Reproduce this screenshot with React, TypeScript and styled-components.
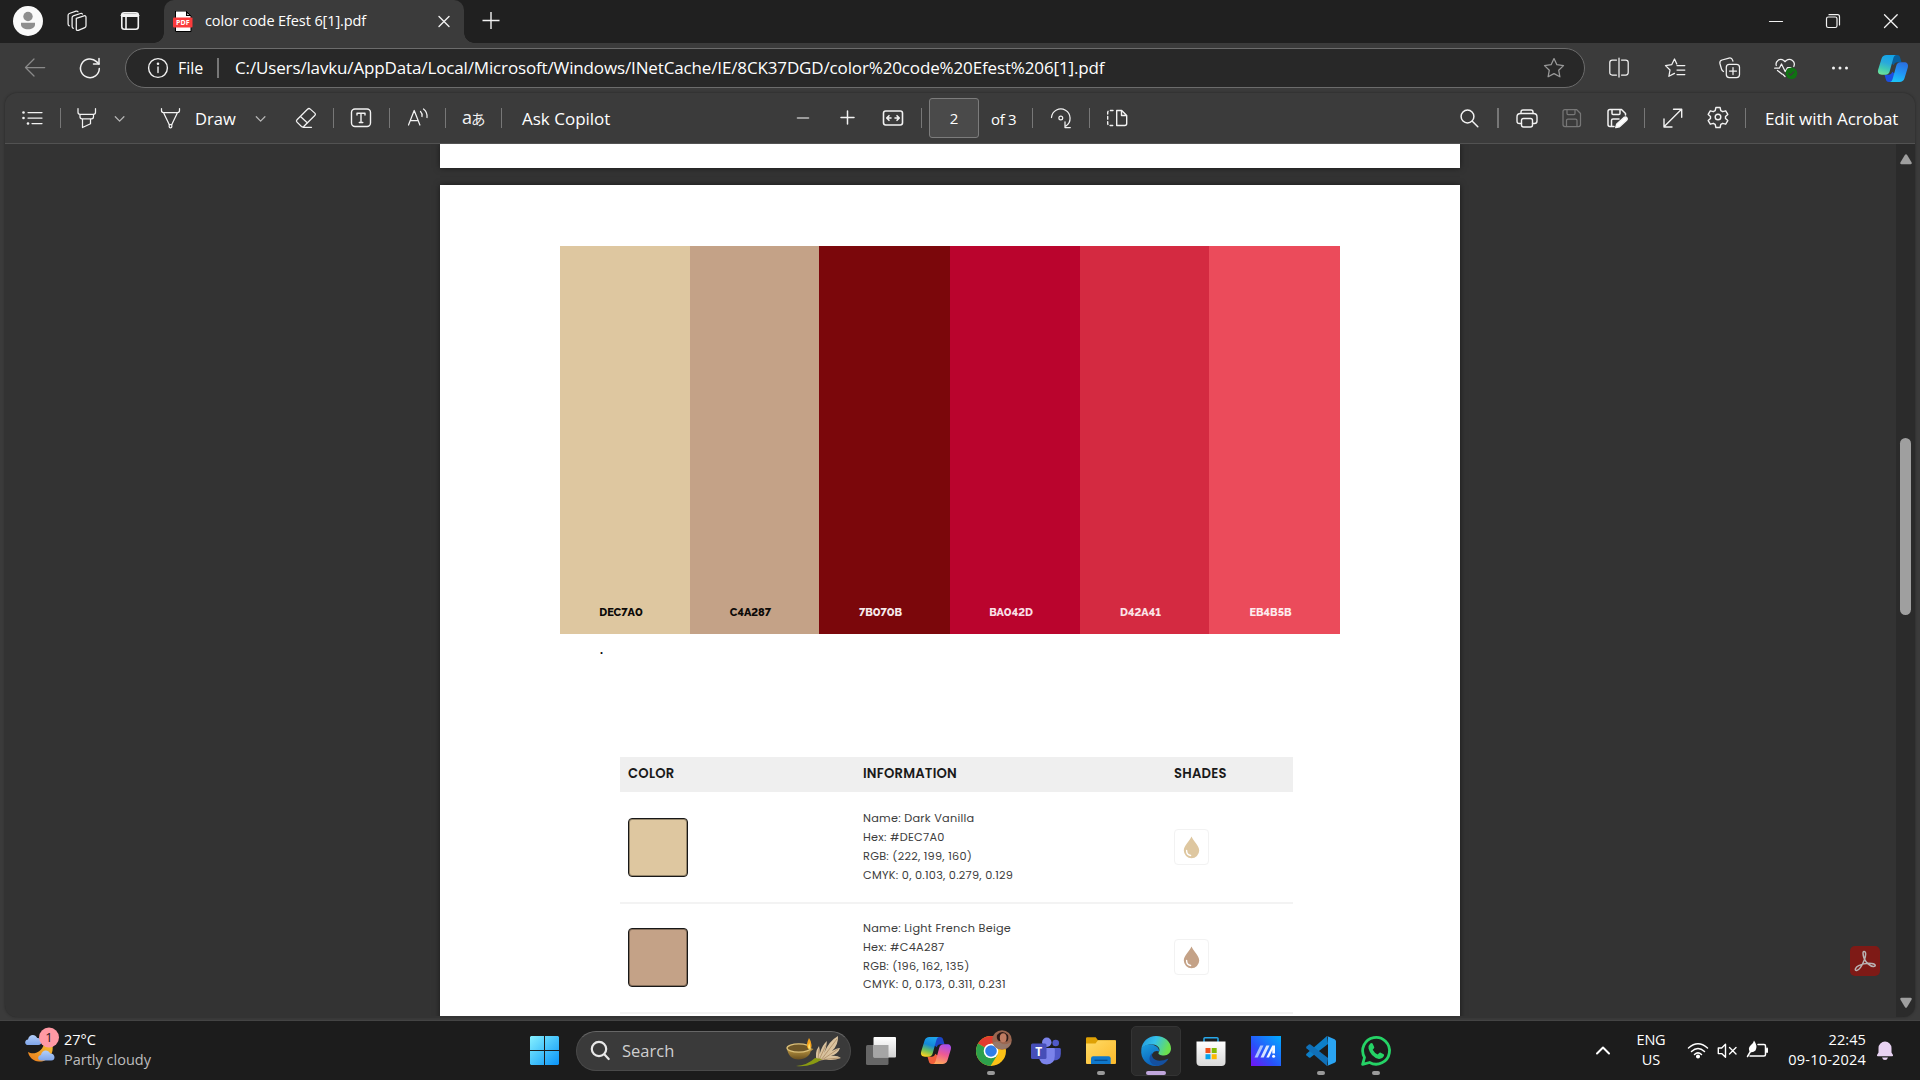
import React from "react";
import styled, { createGlobalStyle } from "styled-components";

const GlobalStyle = createGlobalStyle`
  html, body { margin: 0; background: #3b3b3b; }
  body { width: 1920px; height: 1080px; overflow: hidden; }
  * { box-sizing: border-box; }
`;

const UI = `"Segoe UI", "Open Sans", "Noto Sans", sans-serif`;

const Desktop = styled.div`
  display: flex;
  flex-direction: column;
  width: 1920px;
  height: 1080px;
  background: #3b3b3b;
  color: #fff;
  font-family: ${UI};
  overflow: hidden;
`;

/* ---------- shared pieces ---------- */
const Cell = styled.div<{ $w?: number; $ml?: number }>`
  flex: none;
  display: flex;
  align-items: center;
  justify-content: center;
  width: ${(p) => p.$w ?? 24}px;
  height: 24px;
  margin-left: ${(p) => p.$ml ?? 0}px;
  svg { display: block; flex: none; overflow: visible; }
`;

const Label = styled.span<{ $w?: number; $ml?: number; $size?: number; $track?: number; $color?: string }>`
  flex: none;
  display: block;
  width: ${(p) => (p.$w ? `${p.$w}px` : "auto")};
  margin-left: ${(p) => p.$ml ?? 0}px;
  font-size: ${(p) => p.$size ?? 17}px;
  letter-spacing: ${(p) => p.$track ?? 0}px;
  color: ${(p) => p.$color ?? "#fff"};
  line-height: 24px;
  white-space: nowrap;
`;

const Divider = styled.i<{ $ml: number; $w?: number }>`
  flex: none;
  width: ${(p) => p.$w ?? 1}px;
  height: 20px;
  margin-left: ${(p) => p.$ml}px;
  background: #777;
`;

type IconProps = { children: React.ReactNode; color?: string; sw?: number; size?: number };
const Icon = ({ children, color = "#f2f2f2", sw = 1.25, size = 24 }: IconProps) => (
  <svg width={size} height={size} viewBox="0 0 24 24" fill="none" stroke={color} strokeWidth={sw} strokeLinecap="round" strokeLinejoin="round">
    {children}
  </svg>
);

/* ---------- title bar ---------- */
const TitleBar = styled.header`
  flex: none;
  display: flex;
  height: 43px;
  background: #202020;
`;
const Leading = styled.div`
  display: flex;
  align-items: center;
  width: 164px;
  height: 42px;
`;
const Avatar = styled.div`
  width: 30px;
  height: 30px;
  margin-left: 13px;
  border-radius: 50%;
  background: #fafafa;
  svg { display: block; }
`;
const Tab = styled.div`
  position: relative;
  display: flex;
  align-items: center;
  width: 300px;
  height: 43px;
  padding-bottom: 1px;
  border-radius: 10px 10px 0 0;
  background: #3b3b3b;
  &::before, &::after {
    content: "";
    position: absolute;
    bottom: 0;
    width: 10px;
    height: 10px;
  }
  &::before { left: -10px; background: radial-gradient(circle at 0 0, #202020 9.5px, #3b3b3b 10px); }
  &::after { right: -10px; background: radial-gradient(circle at 100% 0, #202020 9.5px, #3b3b3b 10px); }
`;
const Favicon = styled.div`
  margin-left: 9px;
  width: 20px;
  height: 21px;
  svg { display: block; }
`;
const WindowControls = styled.div`
  display: flex;
  align-items: center;
  height: 42px;
  margin-left: auto;
  margin-right: 17px;
`;

/* ---------- navigation ---------- */
const NavBar = styled.nav`
  flex: none;
  display: flex;
  align-items: center;
  height: 50px;
`;
const AddressBar = styled.div`
  display: flex;
  align-items: center;
  width: 1460px;
  height: 40px;
  margin: 0 0 0 23px;
  padding: 0 18px 0 20px;
  border: 1px solid #6c6c6c;
  border-radius: 20px;
  background: #282828;
  & > :last-child { margin-left: auto; }
`;

/* ---------- pdf viewer ---------- */
const Viewer = styled.main`
  flex: none;
  display: flex;
  flex-direction: column;
  width: 1910px;
  height: 924px;
  margin: 0 5px;
  border-radius: 12px;
  background: #333;
  box-shadow: 0 0 3px rgba(0, 0, 0, 0.35);
  overflow: hidden;
`;
const PdfToolbar = styled.div`
  flex: none;
  display: flex;
  align-items: center;
  height: 51px;
  border-bottom: 1px solid #525252;
  background: #3b3b3b;
  & > span { padding-top: 1px; }
`;
const PageInput = styled.div`
  flex: none;
  display: flex;
  align-items: center;
  justify-content: center;
  width: 50px;
  height: 40px;
  margin-left: 7px;
  border: 1px solid #7c7c7c;
  border-radius: 3px;
  background: #4a4a4a;
  font-size: 15px;
`;
const Body = styled.div`
  display: flex;
  height: 873px;
`;
const Canvas = styled.div`
  position: relative;
  flex: none;
  display: flex;
  flex-direction: column;
  align-items: flex-start;
  width: 1891px;
  height: 872px;
  padding-left: 435px;
  overflow: hidden;
`;
const PreviousPage = styled.div`
  flex: none;
  width: 1020px;
  height: 24px;
  background: #fff;
  box-shadow: 0 0 6px rgba(0, 0, 0, 0.5);
`;
const Page = styled.article`
  flex: none;
  width: 1020px;
  height: 1320px;
  margin-top: 17px;
  padding: 61px 0 0 120px;
  background: #fff;
  box-shadow: 0 0 6px rgba(0, 0, 0, 0.5);
`;
const ScrollTrack = styled.div`
  display: flex;
  flex-direction: column;
  align-items: center;
  width: 19px;
  height: 873px;
  padding: 10px 0 9px;
  background: #2b2b2b;
  svg { display: block; flex: none; }
`;
const Thumb = styled.div`
  width: 11px;
  height: 177px;
  margin: 273px 0 auto;
  border-radius: 6px;
  background: #9f9f9f;
`;
const AcrobatBadge = styled.div`
  position: absolute;
  right: 16px;
  bottom: 40px;
  width: 30px;
  height: 30px;
  border-radius: 5px;
  background: #7e1a16;
  svg { display: block; }
`;

const Palette = styled.div`
  display: grid;
  grid-template-columns: 130px 129px 131px 130px 129px 131px;
  width: 780px;
  height: 388px;
`;
const Band = styled.div<{ $bg: string; $fg: string }>`
  display: flex;
  align-items: flex-end;
  justify-content: center;
  padding: 0 8px 14px 0;
  background: ${(p) => p.$bg};
  color: ${(p) => p.$fg};
  font: 800 11px/15px Raleway, Poppins, Lato, sans-serif;
  font-variant-numeric: lining-nums;
`;
const Mark = styled.p`
  margin: 9px 0 0 40px;
  height: 14px;
  color: #000;
  font: bold 12px/15px "Liberation Serif", serif;
`;
const Table = styled.section`
  width: 673px;
  margin: 100px 0 0 60px;
  font-family: Poppins, Inter, sans-serif;
`;
const HeadRow = styled.div`
  display: grid;
  grid-template-columns: 235px 311px 1fr;
  height: 35px;
  padding-left: 8px;
  background: #efefef;
  color: #1a1a1a;
  font-weight: 600;
  font-size: 13.2px;
  letter-spacing: 0.2px;
  line-height: 33px;
`;
const ColorRow = styled.div<{ $h: number; $top: number }>`
  display: grid;
  grid-template-columns: 235px 311px 1fr;
  align-items: start;
  height: ${(p) => p.$h}px;
  padding: ${(p) => p.$top}px 0 0 8px;
  border-bottom: 2px solid #f3f3f3;
`;
const Swatch = styled.div<{ $bg: string }>`
  width: 60px;
  height: 59px;
  margin-top: 10px;
  border: 1px solid #181818;
  border-radius: 4px;
  background: ${(p) => p.$bg};
  box-shadow: inset 0 0 0 1px rgba(20, 16, 10, 0.35);
`;
const Info = styled.div<{ $lh: number }>`
  margin-top: 1px;
  color: #3c3c3c;
  font-size: 11.3px;
  letter-spacing: 0.26px;
  line-height: ${(p) => p.$lh}px;
  white-space: nowrap;
  div { height: ${(p) => p.$lh}px; }
`;
const ShadeButton = styled.div`
  display: flex;
  align-items: center;
  justify-content: center;
  width: 35px;
  height: 36px;
  margin-top: 21px;
  border: 1px solid #f2f2f2;
  border-radius: 4px;
`;

/* ---------- taskbar ---------- */
const Taskbar = styled.footer`
  flex: none;
  display: flex;
  align-items: center;
  height: 60px;
  margin-top: 3px;
  border-top: 1px solid #444;
  background: #1c1c1c;
`;
const WeatherIcon = styled.div`
  width: 35px;
  height: 36px;
  margin: -12px 0 0 25px;
  svg { display: block; }
`;
const Stack = styled.div<{ $w: number; $ml: number; $align?: string }>`
  display: flex;
  flex-direction: column;
  width: ${(p) => p.$w}px;
  margin-left: ${(p) => p.$ml}px;
  padding-bottom: 2px;
  color: #fff;
  font-size: 14.5px;
  line-height: 20px;
  text-align: ${(p) => p.$align ?? "left"};
  white-space: nowrap;
`;
const Line = styled.span<{ $track?: number; $muted?: boolean }>`
  display: block;
  letter-spacing: ${(p) => p.$track ?? 0}px;
  color: ${(p) => (p.$muted ? "#bdbdbd" : "inherit")};
`;
const SearchBox = styled.div`
  display: flex;
  align-items: center;
  width: 275px;
  height: 40px;
  margin-left: 17px;
  padding: 0 7px 0 10px;
  border: 1px solid #4a4a4a;
  border-top-color: #666;
  border-radius: 20px;
  background: #3a3a3a;
  & > :last-child { margin-left: auto; }
`;
const Apps = styled.div`
  display: flex;
  gap: 5px;
  margin-left: 5px;
`;
const Tile = styled.div<{ $state?: "open" | "active" }>`
  position: relative;
  display: flex;
  align-items: center;
  justify-content: center;
  width: 50px;
  height: 50px;
  border: 1px solid ${(p) => (p.$state === "active" ? "#343434" : "transparent")};
  border-radius: 5px;
  background: ${(p) => (p.$state === "active" ? "#2a2a2a" : "transparent")};
  svg { display: block; overflow: visible; }
  &::after {
    content: "";
    display: ${(p) => (p.$state ? "block" : "none")};
    position: absolute;
    bottom: 0;
    width: ${(p) => (p.$state === "active" ? 20 : 8)}px;
    height: 4px;
    border-radius: 2px;
    background: ${(p) => (p.$state === "active" ? "#c0a6dc" : "#9a9a9a")};
  }
`;

/* ---------- drawings ---------- */
const Ribbon = ({ id, warm }: { id: string; warm?: boolean }) => (
  <svg width="30" height="27" viewBox="0 0 30 27">
    <defs>
      <linearGradient id={`${id}a`} x1="0.6" y1="0" x2="0.3" y2="1">
        <stop offset="0" stopColor={warm ? "#1ea4ea" : "#12a4e8"} />
        <stop offset="0.4" stopColor={warm ? "#1488d8" : "#2aa9dc"} />
        <stop offset="0.7" stopColor={warm ? "#6bbf5c" : "#3fc9b5"} />
        <stop offset="1" stopColor={warm ? "#ffd21f" : "#6ee29a"} />
      </linearGradient>
      <linearGradient id={`${id}b`} x1="0.7" y1="0" x2="0.4" y2="1">
        <stop offset="0" stopColor={warm ? "#a64df0" : "#2a6fe0"} />
        <stop offset="0.5" stopColor={warm ? "#ee5a93" : "#2292f5"} />
        <stop offset="1" stopColor={warm ? "#ffa65c" : "#1cc4f6"} />
      </linearGradient>
    </defs>
    <path d="M14 0h5c2 0 2.700 1 3.200 2.700l1.300 4.500h-4c-2 0-3.200 1-3.800 3L13 8z" fill={warm ? "#1b46c8" : "#075f9e"} />
    <path d="M16 27h-5c-2 0-2.700-1-3.200-2.700l-1.300-4.500h4c2 0 3.200-1 3.800-3L17 19z" fill={warm ? "#f2603c" : "#1b4fe0"} />
    <path d="M8.500 0H18c-1.600.5-2.300 1.800-2.900 4l-3.300 12c-.7 2.600-1.900 3.800-4.300 3.800H4C.8 19.800-.7 17.800.2 14.600L3.500 3.700C4.300 1.200 6 0 8.500 0z" fill={`url(#${id}a)`} />
    <path d="M21.500 27H12c1.600-.5 2.300-1.800 2.900-4l3.300-12c.7-2.600 1.900-3.800 4.300-3.800H26c3.200 0 4.700 2 3.800 5.200l-3.300 10.900c-.8 2.500-2.500 3.700-5 3.700z" fill={`url(#${id}b)`} />
  </svg>
);

const Drop = ({ color }: { color: string }) => (
  <svg width="17" height="23" viewBox="0 0 17 23">
    <path d="M8.500.5C6.500 5 .8 9.800.8 14.600a7.700 7.700 0 0 0 15.400 0C16.200 9.800 10.500 5 8.500.5z" fill={color} />
    <path d="M3.600 14.500c0 2.800 1.600 4.600 4 5" fill="none" stroke="#fff" strokeWidth="1.400" strokeLinecap="round" />
  </svg>
);

const bands = [
  ["DEC7A0", "#0c0a08"],
  ["C4A287", "#0c0a08"],
  ["7B070B", "#f5e9ea"],
  ["BA042D", "#f9dfe5"],
  ["D42A41", "#fbe4e7"],
  ["EB4B5B", "#fdebed"],
];

const colors = [
  { hex: "#DEC7A0", h: 112, top: 16, lh: 19, lines: ["Name: Dark Vanilla", "Hex: #DEC7A0", "RGB: (222, 199, 160)", "CMYK: 0, 0.103, 0.279, 0.129"] },
  { hex: "#C4A287", h: 110, top: 14, lh: 18.8, lines: ["Name: Light French Beige", "Hex: #C4A287", "RGB: (196, 162, 135)", "CMYK: 0, 0.173, 0.311, 0.231"] },
];

const Chevron = () => (
  <svg width="12" height="8" viewBox="0 0 12 8" fill="none" stroke="#b5b5b5" strokeWidth="1.300" strokeLinecap="round" strokeLinejoin="round">
    <path d="M1.300 2.800 5.600 7.100 9.900 2.800" />
  </svg>
);

const TitleRow = () => (
  <TitleBar>
    <Leading>
      <Avatar>
        <svg width="30" height="30" viewBox="0 0 30 30" fill="#8e8e8e">
          <circle cx="15" cy="10.500" r="4.700" />
          <path d="M8 16.800h14v1.400c0 3.400-3 5-7 5s-7-1.600-7-5z" />
        </svg>
      </Avatar>
      <Cell $ml={21}>
        <Icon>
          <path d="M12.300 9.300 20 6.800q2-.5 2 1.400v8.600q0 1.300-1.200 1.800l-6.500 2.700q-2 .7-2-1.300z" />
          <path d="M9.300 19.300q-1.200-.5-1.200-1.800V8.700q0-1.300 1.200-1.800L16.500 4.500q1.300-.4 1.900.5" />
          <path d="M5.300 16.800q-1.200-.5-1.200-1.800V6.300q0-1.300 1.200-1.800l6.700-2.300q1.400-.4 2 .6" />
        </Icon>
      </Cell>
      <Cell $ml={30}>
        <Icon sw={1.6}>
          <rect x="3.800" y="3.800" width="16.500" height="16.500" rx="2.500" />
          <path d="M4.500 6.200h15" strokeWidth="3.600" />
          <path d="M8 8v12" />
        </Icon>
      </Cell>
    </Leading>
    <Tab>
      <Favicon>
        <svg width="20" height="21" viewBox="0 0 20 21">
          <path d="M2.500 0h10.500l5 5v15.500h-15.500z" fill="#fff" stroke="#000" strokeWidth="1" />
          <path d="M13 0v5h5z" fill="#000" />
          <path d="m14.300 2.300 1.800 1.800h-1.800z" fill="#fff" />
          <rect x="0" y="6.500" width="19.500" height="10" rx="1" fill="#fb3b3b" />
          <text x="9.800" y="14" fontSize="7" fontWeight="700" fontFamily="Open Sans, sans-serif" fill="#fff" textAnchor="middle">PDF</text>
        </svg>
      </Favicon>
      <Label $ml={12} $w={220} $size={14.5} $track={-0.1}>color code Efest 6[1].pdf</Label>
      <Cell $ml={7} $w={24}>
        <Icon sw={1.4}><path d="m7 7.500 10 10m0-10-10 10" /></Icon>
      </Cell>
    </Tab>
    <Cell $ml={15}>
      <svg width="18" height="42" viewBox="0 0 18 42" stroke="#f2f2f2" strokeWidth="1.400"><path d="M9 21v17M.5 29.500h17" /></svg>
    </Cell>
    <WindowControls>
      <Cell><Icon sw={1.2}><path d="M5.500 12.500h13" /></Icon></Cell>
      <Cell $ml={33}>
        <Icon sw={1.2}>
          <rect x="5.500" y="8" width="10.500" height="10.500" rx="1.800" />
          <path d="M8 5.700h8.500q2 0 2 2V16" />
        </Icon>
      </Cell>
      <Cell $ml={34}><Icon sw={1.3}><path d="m5.500 5.800 12.700 12.700m0-12.700L5.500 18.500" /></Icon></Cell>
    </WindowControls>
  </TitleBar>
);

const Nav = () => (
  <NavBar>
    <Cell $ml={23}><Icon color="#8a8a8a"><path d="M21.700 11.500H2.500M11 3 2.500 11.500 11 20" /></Icon></Cell>
    <Cell $ml={31}>
      <Icon sw={1.5}>
        <path d="M21.300 12.500A9.400 9.400 0 1 1 18.500 5.600L21 8" />
        <path d="M21 2.500V8h-5.500" />
      </Icon>
    </Cell>
    <AddressBar>
      <Cell>
        <Icon sw={1.4}><circle cx="12" cy="12" r="9.400" /><path d="M12 11v5.500" /><circle cx="12" cy="7.800" r=".6" fill="#fff" /></Icon>
      </Cell>
      <Label $ml={8} $w={34} $size={16}>File</Label>
      <Divider $ml={5} $w={2} />
      <Label $ml={16} $size={17} $track={-0.14}>
        C:/Users/lavku/AppData/Local/Microsoft/Windows/INetCache/IE/8CK37DGD/color%20code%20Efest%206[1].pdf
      </Label>
      <Cell>
        <Icon color="#9a9a9a"><path d="m12 2.600 2.900 6.100 6.600.9-4.800 4.600 1.200 6.600-5.900-3.200-5.900 3.200 1.200-6.600-4.800-4.600 6.600-.9z" /></Icon>
      </Cell>
    </AddressBar>
    <Cell $ml={22}>
      <Icon>
        <path d="M9.500 4H5.300q-2.500 0-2.500 2.500v10Q2.800 19 5.300 19H9.500M14.500 4h4.200q2.500 0 2.500 2.500v10q0 2.500-2.500 2.500h-4.200M12 2v19" />
      </Icon>
    </Cell>
    <Cell $ml={32}>
      <Icon>
        <path d="M13.800 8 11.500 3 8.700 8.700l-6.200.9 4.500 4.400-1.100 6.300 5.600-2.900" />
        <path d="M14 9.500h7.800M14 14h7.800M14 18.500h7.800" />
      </Icon>
    </Cell>
    <Cell $ml={31}>
      <Icon>
        <rect x="8.300" y="8.300" width="13.200" height="13.200" rx="3" />
        <path d="M15 11.500v7M11.500 15h7" />
        <path d="M5.500 15.500Q4 14.800 3.500 13L1.900 7.500Q1.400 4.700 4 4l7-1.900q2.800-.6 3.600 2l.3 1" />
      </Icon>
    </Cell>
    <Cell $ml={31}>
      <Icon>
        <path d="M12 20.500 9.800 18.300M3.300 9.500C2 5.500 6.500 1.500 10.800 4.500L12 5.700l1.200-1.200C17.500 1.500 23 5.500 20.800 10.500" />
        <path d="M1.700 12.200h4.600l2.200-4.200 3.700 7.500 2.300-4h3.500M4.500 14.500 9 18" />
        <circle cx="18.500" cy="17.300" r="5.800" fill="#0f7312" stroke="none" />
        <path d="m16 17.500 1.700 1.700 3.200-3.400" stroke="#3b3b3b" />
      </Icon>
    </Cell>
    <Cell $ml={31}>
      <Icon><g fill="#f2f2f2" stroke="none"><circle cx="5.500" cy="12" r="1.500" /><circle cx="12" cy="12" r="1.500" /><circle cx="18.500" cy="12" r="1.500" /></g></Icon>
    </Cell>
    <Cell $ml={26} $w={30}><Ribbon id="nav" /></Cell>
  </NavBar>
);

const Tools = () => (
  <PdfToolbar>
    <Cell $ml={15}>
      <Icon>
        <path d="M8 6.500h14M8 12h14M12 17.500h10" />
        <g fill="#f2f2f2" stroke="none"><circle cx="3.500" cy="6.500" r="1.300" /><circle cx="3.500" cy="12" r="1.300" /><circle cx="8" cy="17.500" r="1.300" /></g>
      </Icon>
    </Cell>
    <Divider $ml={16} />
    <Cell $ml={14}>
      <Icon>
        <path d="M3 2.500v3.800q0 2 2 2h13.500q2 0 2-2V2.500M5 8.500v2.300q0 2 2 2h9.500q2 0 2-2V8.500M7.500 13v8.500l8-3.800V13" />
      </Icon>
    </Cell>
    <Cell $ml={15} $w={12}><Chevron /></Cell>
    <Cell $ml={33}>
      <Icon>
        <path d="M2.500 2.500v2q0 2 2 2h14q2 0 2-2v-2M4.700 7l5.500 11.500v2.300q0 1 1.300 1t1.300-1v-2.300L18.300 7M10 18.500h3" />
      </Icon>
    </Cell>
    <Label $ml={12} $w={45} $size={16.5}>Draw</Label>
    <Cell $ml={15} $w={12}><Chevron /></Cell>
    <Cell $ml={27}>
      <Icon>
        <path d="M13.500 3.200 3 13.700q-1.200 1.200 0 2.400l4.500 4.400q1 .8 2.200 0L20.800 9.500q1.200-1.200 0-2.400l-4.500-4q-1.400-1.200-2.800.1zM6.500 10.500l7 6.500M9 21.300h8.500" />
      </Icon>
    </Cell>
    <Divider $ml={15} />
    <Cell $ml={15}>
      <Icon sw={1.4}>
        <rect x="2.500" y="3" width="19" height="17.500" rx="3.500" />
        <path d="M8 9V7.300h8V9M12 7.500v9M10.300 16.500h3.500" />
      </Icon>
    </Cell>
    <Divider $ml={16} />
    <Cell $ml={16}>
      <Icon>
        <path d="m2.500 19 5.700-14.500L13.900 19M4.500 14.500h7.500M14.500 5.500q2 2 1.500 5M17.500 3q4 3 3.500 8.500" />
      </Icon>
    </Cell>
    <Divider $ml={15} />
    <Cell $ml={15} $w={26}>
      <svg width="26" height="24" viewBox="0 0 26 24" fill="#f2f2f2">
        <text x="1" y="18" fontSize="18" fontFamily="Open Sans, sans-serif">a</text>
        <text x="10" y="18.500" fontSize="14.500" fontFamily="Noto Sans CJK JP, sans-serif">あ</text>
      </svg>
    </Cell>
    <Divider $ml={14} />
    <Label $ml={20} $w={100} $size={17}>Ask Copilot</Label>
    <Cell $ml={169}><Icon color="#bdbdbd" sw={1.6}><path d="M6.500 12h11" /></Icon></Cell>
    <Cell $ml={21}><Icon sw={1.5}><path d="M5 11.500h13M11.500 5v13" /></Icon></Cell>
    <Cell $ml={21}>
      <Icon sw={1.6}>
        <rect x="2.500" y="5" width="19" height="14" rx="2.200" />
        <path d="M10 12H5.800m2.200-2.300L5.700 12 8 14.300M14 12h4.200M16 9.700l2.300 2.300-2.300 2.300" />
      </Icon>
    </Cell>
    <Divider $ml={16} />
    <PageInput>2</PageInput>
    <Label $ml={12} $w={31} $size={15} $track={-0.3}>of 3</Label>
    <Divider $ml={10} />
    <Cell $ml={16}>
      <Icon>
        <path d="M2.500 11.500a9.300 9.300 0 1 1 14.500 8.500M16 15.800v5.700h5.300" />
        <circle cx="11.800" cy="12" r="1.900" />
      </Icon>
    </Cell>
    <Divider $ml={16} />
    <Cell $ml={15}>
      <Icon sw={1.4}>
        <path d="M11.700 4.500h5l5 5v8q0 2-2 2h-8zM16.500 4.500v5h5" />
        <path d="M8 4.500H5q-2.300 0-2.300 2.300v10.500q0 2.200 2.300 2.200h3" strokeDasharray="2.600 2.600" />
      </Icon>
    </Cell>
    <Cell $ml={328}><Icon sw={1.5}><circle cx="10.500" cy="10.500" r="6.400" /><path d="m15.300 15.200 5.500 5.500" /></Icon></Cell>
    <Divider $ml={16} $w={2} />
    <Cell $ml={16}>
      <Icon sw={1.4}>
        <path d="M6.500 17.500h-2q-2.500 0-2.500-2.500v-4q0-3.500 3.500-3.500h13q3.500 0 3.500 3.500v4q0 2.500-2.500 2.500h-2" />
        <path d="M6 7.500V6q0-2 2-2h8q2 0 2 2v1.500" />
        <rect x="6.500" y="12.500" width="11" height="8.500" rx="2" />
      </Icon>
    </Cell>
    <Cell $ml={21}>
      <Icon color="#777">
        <path d="M5 3.500h11.500L20.500 7.500v11q0 2-2 2H5q-2 0-2-2v-13q0-2 2-2zM7 3.500v4q0 1 1 1h6q1 0 1-1v-4M6.500 20.500v-6q0-1.500 1.500-1.500h7.500q1.500 0 1.500 1.500v6" />
      </Icon>
    </Cell>
    <Cell $ml={21}>
      <Icon sw={1.5}>
        <path d="M9 20.500H5q-2 0-2-2v-13q0-2 2-2h11.500L20.500 7.500V9M7 3.500v4q0 1 1 1h6q1 0 1-1v-4M6.500 20.500v-6q0-1.500 1.500-1.500h6" />
        <path d="m10.800 21.500 1-3.500 7.200-6.500q1.700-1 2.800.2t-.2 2.600L14.500 20.700z" fill="#fff" />
      </Icon>
    </Cell>
    <Divider $ml={15} />
    <Cell $ml={16}><Icon sw={1.4}><path d="M3 20.800 20.500 3.300M3 13v8h8M12.500 3.200h8.200v8" /></Icon></Cell>
    <Cell $ml={21}>
      <Icon sw={1.4}>
        <circle cx="12" cy="11" r="2.800" />
        <path d="M9.900 1.500h4.200l.7 3.100 1.900 1.100 3-.9 2.100 3.600-2.300 2.200v1.800l2.300 2.200-2.100 3.600-3-.9-1.900 1.100-.7 3.100H9.900l-.7-3.100-1.900-1.100-3 .9-2.100-3.600 2.300-2.200v-1.800L2.200 8.400l2.100-3.600 3 .9 1.900-1.100z" />
      </Icon>
    </Cell>
    <Divider $ml={15} />
    <Label $ml={19} $size={17} $track={-0.1}>Edit with Acrobat</Label>
  </PdfToolbar>
);

const Document = () => (
  <Body>
    <Canvas>
      <PreviousPage />
      <Page>
        <Palette>
          {bands.map(([hex, fg]) => (
            <Band key={hex} $bg={`#${hex}`} $fg={fg}>{hex}</Band>
          ))}
        </Palette>
        <Mark>.</Mark>
        <Table>
          <HeadRow><span>COLOR</span><span>INFORMATION</span><span>SHADES</span></HeadRow>
          {colors.map((c) => (
            <ColorRow key={c.hex} $h={c.h} $top={c.top}>
              <Swatch $bg={c.hex} />
              <Info $lh={c.lh}>{c.lines.map((l) => <div key={l}>{l}</div>)}</Info>
              <ShadeButton><Drop color={c.hex} /></ShadeButton>
            </ColorRow>
          ))}
        </Table>
      </Page>
      <AcrobatBadge>
        <svg width="30" height="30" viewBox="0 0 30 30" fill="none" stroke="#b9b3b3" strokeWidth="1.500" strokeLinejoin="round">
          <path d="M14 5.500c2.500 0 1.800 4.500.3 8.500C12.500 18.500 9.500 24 6.700 24.500c-2.500.2-1.500-3 2-4.800 4-2 9.500-2.700 13-2.200 4.500.6 4.300 3.200 1.700 3-3.400-.3-7.700-4-9.400-8.500-1-3-1.500-6.500 0-6.500z" />
        </svg>
      </AcrobatBadge>
    </Canvas>
    <ScrollTrack>
      <svg width="12" height="11" viewBox="0 0 12 11" fill="#9f9f9f"><path d="M5 .8q1-1.200 2 0l4.500 7.500q.8 2-1 2H1.500q-1.800 0-1-2z" /></svg>
      <Thumb />
      <svg width="12" height="11" viewBox="0 0 12 11" fill="#9f9f9f"><path d="M5 10.200q1 1.200 2 0l4.500-7.500q.8-2-1-2H1.500q-1.800 0-1 2z" /></svg>
    </ScrollTrack>
  </Body>
);

const Cloud = ({ x, y }: { x: number; y: number }) => (
  <path transform={`translate(${x} ${y})`} d="M3.200 11C-.8 11-.8 6 3 5.500 3.500.5 10-1 12.200 4c4.800-.5 6.300 7 1 7z" fill="url(#cloud)" />
);

const Bottom = () => (
  <Taskbar>
    <WeatherIcon>
      <svg width="35" height="36" viewBox="0 0 35 36">
        <defs>
          <linearGradient id="cloud" x1="0" y1="0" x2="0" y2="1"><stop offset="0" stopColor="#b4d0fa" /><stop offset="1" stopColor="#7fa5ea" /></linearGradient>
          <linearGradient id="moon" x1="1" y1="0" x2="0" y2="1"><stop offset="0" stopColor="#f5c034" /><stop offset="1" stopColor="#ea7a1c" /></linearGradient>
        </defs>
        <path d="M27 17c3 9-4 18-13 17.500-5.500-.3-10-4-11-9.500 5 3 13.500 1 16-8z" fill="url(#moon)" />
        <Cloud x={0} y={7} />
        <Cloud x={13} y={22.500} />
        <circle cx="24" cy="10.500" r="10" fill="#ff99a4" />
        <text x="24" y="15.300" fontSize="13" fontFamily="Open Sans, sans-serif" textAnchor="middle" fill="#2b1517">1</text>
      </svg>
    </WeatherIcon>
    <Stack $ml={4} $w={100}>
      <Line>27°C</Line>
      <Line $muted>Partly cloudy</Line>
    </Stack>
    <Cell $ml={365} $w={30}>
      <svg width="29" height="29" viewBox="0 0 29 29">
        <defs><linearGradient id="win" x1="0" y1="0" x2="1" y2="1"><stop offset="0" stopColor="#86f1ff" /><stop offset="0.500" stopColor="#46c3fb" /><stop offset="1" stopColor="#0a93f8" /></linearGradient></defs>
        <path d="M1 0h13v14H0V1zM15 0h13l1 1v13H15zM0 15h14v14H1l-1-1zM15 15h14v13l-1 1H15z" fill="url(#win)" />
      </svg>
    </Cell>
    <SearchBox>
      <Cell $ml={1} $w={24}><Icon sw={2.2} color="#e8e8e8"><circle cx="11" cy="10" r="7.200" /><path d="m16.500 15.500 4.200 4.500" /></Icon></Cell>
      <Label $ml={10} $size={16.5} $color="#cfcfcf">Search</Label>
      <Cell $w={57}>
        <svg width="57" height="32" viewBox="0 0 57 32">
          <defs><linearGradient id="bowl" x1="0" y1="0" x2="0" y2="1"><stop offset="0" stopColor="#c29d45" /><stop offset="1" stopColor="#6a5020" /></linearGradient></defs>
          <path d="M1 13c.5 7 5 11.500 11.500 11.500S24 20.500 24.500 16.500l3-2.500-3.500-1z" fill="url(#bowl)" />
          <ellipse cx="12.800" cy="13" rx="11.800" ry="4.200" fill="#6e5627" stroke="#dcc079" strokeWidth="1.300" />
          <path d="M23 3q-3.500 7-1 10.500 4 1 3.500-3.500T23 3z" fill="#f7a51c" />
          <path d="M23.300 8q-2 4-.5 6 2 0 1.500-2z" fill="#ffe36b" />
          <path d="M31 26Q28 18 33 11q1 4 .7 8Q36 10 41 6q-.5 7-3 12Q43 6 52 1q.5 9-6 15 5-3 8-3-2 6-9 8 6-1 10 2-8 3-15 1.500-5 .5-9 1.500z" fill="#d9c29e" />
          <path d="M32 25 33 14M33 25l7-15M35 25 51 4M36 25l16-11M38 24.500l15-1.500" stroke="#a3835c" strokeWidth=".7" fill="none" />
          <path d="M10 31q11-.5 19-8l7 1q-10 8.500-26 7z" fill="#8a9a12" />
        </svg>
      </Cell>
    </SearchBox>
    <Apps>
      <Tile>
        <svg width="30" height="28" viewBox="0 0 30 28">
          <defs><linearGradient id="tv" x1="0" y1="0" x2="0" y2="1"><stop offset="0" stopColor="#fff" /><stop offset="1" stopColor="#d2d2d2" /></linearGradient></defs>
          <rect x="0" y="8" width="22.500" height="20" rx="1.500" fill="#666" />
          <rect x="7.500" y="0" width="22.500" height="20.500" rx="1" fill="url(#tv)" />
          <path d="M7.500 8h15v12.500h-15z" fill="#a5a5a5" />
        </svg>
      </Tile>
      <Tile><Ribbon id="cp" warm /></Tile>
      <Tile $state="open">
        <svg width="30" height="30" viewBox="0 0 30 30">
          <circle cx="15" cy="15" r="15" fill="#fbc116" />
          <path d="M15 15 2 7.500A15 15 0 0 1 28 7.500H15z" fill="#e33b2e" />
          <path d="M2 7.500A15 15 0 0 0 14.500 30L21.500 18.700 15 15z" fill="#2da04b" />
          <circle cx="15" cy="15" r="7.300" fill="#fff" />
          <circle cx="15" cy="15" r="5.800" fill="#2f7de9" />
          <circle cx="26" cy="4" r="9.800" fill="#9a6650" />
          <path d="M21-1Q26-7 32-1q1 4-1 6.500l-8-.5q-3-2-2-6z" fill="#2b1a17" />
          <ellipse cx="27.200" cy="1.800" rx="3.400" ry="4.500" fill="#c07c62" />
          <path d="M16.700 7q4-3 8 0t10.500-1a9.800 9.800 0 0 1-18.500 1z" fill="#97786a" />
        </svg>
      </Tile>
      <Tile>
        <svg width="30" height="28" viewBox="0 0 30 28">
          <circle cx="15.800" cy="5.200" r="4.700" fill="#7b83eb" />
          <circle cx="24.700" cy="6" r="3.300" fill="#5059c9" />
          <path d="M19 11h9.500q1.300 0 1.300 1.300V17q0 6-6.500 6.500z" fill="#5059c9" />
          <path d="M8 11h14.500q1.300 0 1.300 1.300V19q0 8-8 8.500-7-.5-7.800-7z" fill="#7b83eb" />
          <rect y="6.500" width="15.500" height="15.500" rx="1.500" fill="#464eb8" />
          <text x="7.700" y="18.500" fontSize="12" fontWeight="700" fontFamily="Open Sans, sans-serif" textAnchor="middle" fill="#fff">T</text>
        </svg>
      </Tile>
      <Tile $state="open">
        <svg width="30" height="27" viewBox="0 0 30 27">
          <defs><linearGradient id="fold" x1="0" y1="0" x2="1" y2="1"><stop offset="0" stopColor="#ffdb66" /><stop offset="1" stopColor="#fcb92a" /></linearGradient></defs>
          <path d="M0 1.500Q0 .3 1.200.3h8.500L12 3.200h17q1 0 1 1V12H0z" fill="#dfa104" />
          <path d="M0 6.500h9.500L12 3.200h17q1 0 1 1V26q0 1-1 1H1q-1 0-1-1z" fill="url(#fold)" />
          <path d="M5 27v-5.500q0-2.200 2.200-2.200h15.300q2.200 0 2.200 2.200V27z" fill="#0f78cc" />
          <path d="M8.500 23.300h13" stroke="#084b8c" strokeWidth="1.300" />
        </svg>
      </Tile>
      <Tile $state="active">
        <svg width="30" height="30" viewBox="0 0 30 30">
          <defs>
            <linearGradient id="e1" x1="0" y1="0" x2="1" y2="0.300"><stop offset="0" stopColor="#2094dc" /><stop offset="0.500" stopColor="#35c1ea" /><stop offset="1" stopColor="#6be04f" /></linearGradient>
            <linearGradient id="e2" x1="0" y1="0" x2="0.400" y2="1"><stop offset="0" stopColor="#1ca0e0" /><stop offset="1" stopColor="#0b62bb" /></linearGradient>
          </defs>
          <path d="M.3 13.500C1.200 5.500 7 0 15 0c9 0 15 6 15 12.500 0 4-3 7-7 7-4 0-6.500-1.500-5.300-3C20 13.500 17.500 9 12 8.500 7 8 2 10 .3 13.500z" fill="url(#e1)" />
          <path d="M.3 13.500C2 9 6.500 8 10 8.500c5.500.5 8.500 4 8 7-4-2-8.500 2-7 7 1 4 4 6.500 7.500 7C8 32-1 24 .3 13.500z" fill="url(#e2)" />
          <path d="M11 17c-1 6 5 10.500 16.500 5.500C25 27.500 20 30 16 30c-7-1-10-8-5-13z" fill="#1450a0" />
        </svg>
      </Tile>
      <Tile>
        <svg width="30" height="30" viewBox="0 0 30 30">
          <defs><linearGradient id="bag" x1="0" y1="0" x2="0" y2="1"><stop offset="0" stopColor="#fff" /><stop offset="1" stopColor="#d9d9d9" /></linearGradient></defs>
          <path d="M8 6V2.500Q8 1.700 9 1.700h12q1 0 1 .8V6" fill="none" stroke="#28a8ea" strokeWidth="1.500" />
          <path d="M.5 5.500h29V26q0 4-4 4h-21q-4 0-4-4z" fill="url(#bag)" />
          <path d="M9.500 12h5v5h-5z" fill="#f1511b" /><path d="M15.700 12h5v5h-5z" fill="#80bb03" /><path d="M9.500 18.200h5v5h-5z" fill="#03a4ee" /><path d="M15.700 18.200h5v5h-5z" fill="#fcb902" />
        </svg>
      </Tile>
      <Tile>
        <svg width="30" height="30" viewBox="0 0 30 30">
          <defs><linearGradient id="asus" x1="0" y1="1" x2="1" y2="0"><stop offset="0" stopColor="#7412f6" /><stop offset="0.400" stopColor="#2a50fa" /><stop offset="1" stopColor="#00adff" /></linearGradient></defs>
          <path d="M0 0h30v30H0z" fill="url(#asus)" />
          <path d="M3.500 21.500 9.300 9.500h3.200L6.700 21.500z" fill="#a9c4ff" />
          <path d="M9.500 21.500 15.300 9.500h3.200L12.700 21.500z" fill="#d6e4ff" />
          <path d="M15.300 21.500 21.300 9.500H24v8h-2.700V14l-3.300 7.500z" fill="#f5f8ff" />
          <circle cx="22.600" cy="20.200" r="1.500" fill="#fff" />
        </svg>
      </Tile>
      <Tile $state="open">
        <svg width="30" height="30" viewBox="0 0 30 30">
          <path d="M22 8 4.500 21.500q-.8.600-1.600 0L.5 19.500q-.9-.9 0-1.700L21 0z" fill="#0d7fc8" />
          <path d="M22 22 4.500 8.500q-.8-.6-1.600 0L.5 10.500q-.9.900 0 1.700L21 30z" fill="#1070b8" />
          <path d="m21 0 7.600 3.300q1.400.8 1.400 2v19.400q0 1.300-1.400 2L21 30q1-.6 1-2V2q0-1.300-1-2z" fill="#2aa4f2" />
        </svg>
      </Tile>
      <Tile $state="open">
        <svg width="30" height="30" viewBox="0 0 30 30">
          <path d="m1.600 28.400 1.900-6.900A13.400 13.400 0 1 1 8.600 26.500z" fill="none" stroke="#25d366" strokeWidth="2.800" strokeLinejoin="round" />
          <path d="M9.300 7.500q1.300-1 2.300 0l1.700 3.700q.2.900-1.600 2.600 1.700 3.300 5 4.700 1.900-2.300 2.500-2l3.500 1.700q.7.500.1 2-1.600 3-5 2.700Q9.800 21 7.500 12.500q-.4-3 1.800-5z" fill="#25d366" />
        </svg>
      </Tile>
    </Apps>
    <Cell $ml={190}><Icon sw={2} color="#fff"><path d="m6 14.500 6-6 6 6" /></Icon></Cell>
    <Stack $ml={16} $w={40} $align="center"><Line $track={-0.2}>ENG</Line><Line>US</Line></Stack>
    <Cell $ml={15}>
      <Icon color="#fff" sw={1.5}>
        <path d="M2.500 9q9.500-8.500 19 0M5.500 12.500q6.500-6 13 0M8.500 15.500q3.500-3.200 7 0" /><circle cx="12" cy="17.500" r="1.300" fill="#fff" />
      </Icon>
    </Cell>
    <Cell $ml={5}>
      <Icon color="#fff" sw={1.4}><path d="M3.300 9h3.400l3.800-3.700v13l-3.800-3.700H3.300zM14.500 8.500l6.500 6.500m0-6.500-6.500 6.500" /></Icon>
    </Cell>
    <Cell $ml={6}>
      <Icon color="#fff" sw={1.5}>
        <path d="M13 5.500h6q1.500 0 1.500 1.500v8.500q0 1.500-1.500 1.500H5" /><path d="M22 9.500v3.500" strokeWidth="2" />
        <path d="M9 1.500q4 5.500 1.500 10-2.500 2.500-5.500 1.500-2.500-3.500.5-6.500Q8.500 4.500 9 1.500z" fill="#fff" stroke="none" /><path d="M6 11.500 2.500 17.500" />
      </Icon>
    </Cell>
    <Stack $ml={7} $w={90} $align="right"><Line $track={0.1}>22:45</Line><Line $track={0.2}>09-10-2024</Line></Stack>
    <Cell $ml={7}>
      <Icon size={24}>
        <g stroke="none" fill="#e8d2f2"><path d="M4 16.500V16l1.500-2.500V9a6.500 6.500 0 0 1 13 0v4.500L20 16v.5q0 .8-.8.800H4.800q-.8 0-.8-.8z" /><path d="M9 18.500h6q-.8 2.500-3 2.500t-3-2.500z" /></g>
      </Icon>
    </Cell>
  </Taskbar>
);

export default function App() {
  return (
    <Desktop>
      <GlobalStyle />
      <TitleRow />
      <Nav />
      <Viewer>
        <Tools />
        <Document />
      </Viewer>
      <Bottom />
    </Desktop>
  );
}
